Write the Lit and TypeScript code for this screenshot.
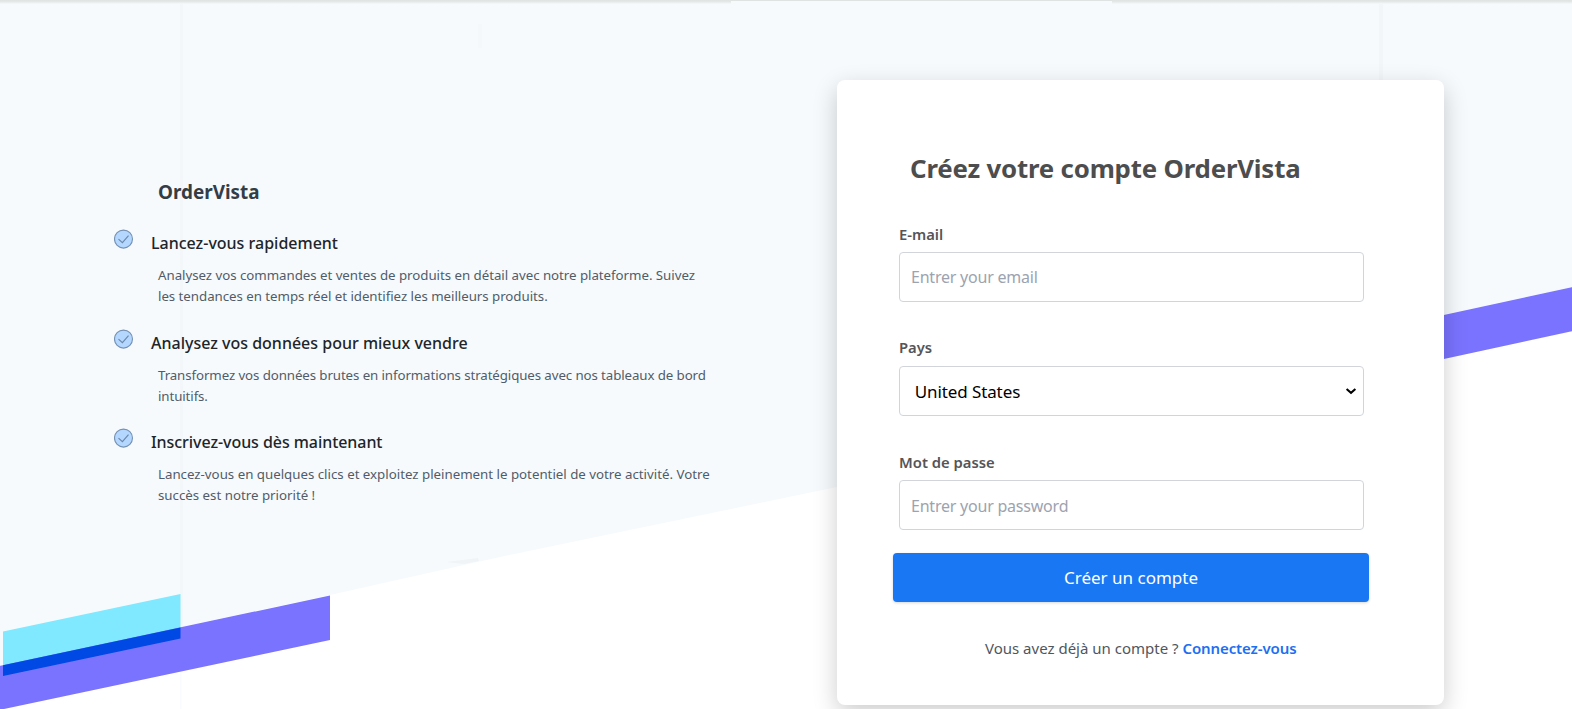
import { LitElement, html, css, svg } from "lit";
import { customElement } from "lit/decorators.js";

interface Feature {
  kind: string;
  title: string;
  lines: string[];
}

const FEATURES: Feature[] = [
  {
    kind: "start",
    title: "Lancez-vous rapidement",
    lines: [
      "Analysez vos commandes et ventes de produits en détail avec notre plateforme. Suivez",
      "les tendances en temps réel et identifiez les meilleurs produits.",
    ],
  },
  {
    kind: "analyse",
    title: "Analysez vos données pour mieux vendre",
    lines: [
      "Transformez vos données brutes en informations stratégiques avec nos tableaux de bord",
      "intuitifs.",
    ],
  },
  {
    kind: "signup",
    title: "Inscrivez-vous dès maintenant",
    lines: [
      "Lancez-vous en quelques clics et exploitez pleinement le potentiel de votre activité. Votre",
      "succès est notre priorité !",
    ],
  },
];

@customElement("page-backdrop")
class PageBackdrop extends LitElement {
  static styles = css`
    :host {
      position: absolute;
      inset: 0;
      overflow: hidden;
    }
    svg {
      display: block;
    }
  `;

  render() {
    return html`<svg width="1572" height="709" viewBox="0 0 1572 709" aria-hidden="true">
      ${svg`
      <defs>
        <linearGradient id="top" x1="0" y1="0" x2="0" y2="1">
          <stop offset="0" stop-color="#dfe3e2" />
          <stop offset="0.4" stop-color="#e4e8e7" />
          <stop offset="1" stop-color="#f6fafd" />
        </linearGradient>
        <filter id="soft" x="-5%" y="-5%" width="110%" height="110%">
          <feGaussianBlur stdDeviation="0.6" />
        </filter>
      </defs>
      <rect width="1572" height="709" fill="#f6fafd" />
      <rect x="180" width="3" height="709" fill="#f3f7fa" />
      <rect x="478" width="4" y="24" height="24" fill="#f4f8fb" />
      <rect x="1379" width="4" height="709" fill="#f2f6f9" />
      <rect width="1572" height="1" fill="#dfe3e2" />
      <rect width="731" height="4" fill="url(#top)" />
      <rect x="1112" width="460" height="4" fill="url(#top)" />
      <polygon points="446,562 478,558 479,561 464,564" fill="#f1f4f6" filter="url(#soft)" />
      <g filter="url(#soft)">
        <polygon points="-5,667 330,595 500,557 837,487 1444,359 1580,330 1580,720 -5,720" fill="#fff" />
        <polygon points="3,631.5 180.5,594 180.5,638.5 3,676" fill="#80e9ff" />
        <polygon points="-5,667 330,595.5 330,640 -5,711" fill="#7a73ff" />
        <polygon points="3,665.3 180.5,627.5 180.5,638.5 3,676" fill="#0048e5" />
        <polygon points="1400,324.5 1580,285.5 1580,329.5 1400,368.5" fill="#7a73ff" />
      </g>
      <rect x="180" y="672" width="1.5" height="37" fill="#fafbfe" />
      `}
    </svg>`;
  }
}

@customElement("feature-list")
class FeatureList extends LitElement {
  static styles = css`
    :host {
      display: block;
      font-family: "Noto Sans", "Open Sans", sans-serif;
    }
    .brand {
      margin: 0 0 25.3px 44px;
      font-size: 18.9px;
      line-height: 28px;
      font-weight: 700;
      color: #343d46;
    }
    .list {
      display: grid;
      gap: 23.7px;
    }
    .item {
      display: grid;
      grid-template-columns: 20px 1fr;
      column-gap: 17px;
      align-items: start;
    }
    .icon {
      display: block;
      margin-top: -2px;
    }
    .title {
      margin: 0 0 10px;
      font-size: 16px;
      line-height: 24px;
      font-weight: 500;
      color: #212529;
      white-space: nowrap;
    }
    .text {
      margin: 0 0 0 7px;
      font-size: 13.3px;
      line-height: 21px;
      color: #515c69;
      white-space: nowrap;
    }
    .line {
      display: block;
    }
    .start .text {
      letter-spacing: -0.04px;
    }
    .analyse .text {
      letter-spacing: -0.1px;
    }
    .signup .text {
      letter-spacing: -0.01px;
    }
    .signup .title {
      letter-spacing: -0.06px;
    }
  `;

  render() {
    return html`
      <h2 class="brand">OrderVista</h2>
      <div class="list">
        ${FEATURES.map(
          (f) => html`
            <div class="item ${f.kind}">
              <svg class="icon" width="20" height="20" viewBox="0 0 20 20" fill="none" aria-hidden="true">
                <circle cx="9.5" cy="10.1" r="9" fill="#b3d7ff" stroke="#7591b3" stroke-width="1.1" />
                <path d="M4.5 10.2 L8.4 13.7 L14.5 6.7" stroke="#6b86a8" stroke-width="1.1" />
              </svg>
              <div>
                <h3 class="title">${f.title}</h3>
                <p class="text">${f.lines.map((l) => html`<span class="line">${l}</span>`)}</p>
              </div>
            </div>
          `
        )}
      </div>
    `;
  }
}

@customElement("signup-card")
class SignupCard extends LitElement {
  static styles = css`
    :host {
      display: block;
      box-sizing: border-box;
      width: 607px;
      height: 625px;
      padding: 70px 75px 0 56px;
      background: #fff;
      border-radius: 8px;
      box-shadow: 0 8px 24px rgba(0, 0, 0, 0.2);
      font-family: "Noto Sans", "Open Sans", sans-serif;
    }
    .title {
      margin: 0 0 37px 17px;
      font-size: 25.8px;
      letter-spacing: -0.18px;
      line-height: 36px;
      font-weight: 700;
      color: #4d4d4d;
      white-space: nowrap;
    }
    .fields {
      display: flex;
      flex-direction: column;
      padding: 0 5px 0 6px;
    }
    .label {
      margin-bottom: 7px;
      font-size: 14.8px;
      line-height: 22px;
      font-weight: 600;
      color: #555558;
    }
    .control {
      display: block;
      box-sizing: border-box;
      width: 100%;
      height: 50px;
      margin: 0 0 34px;
      padding: 0 11px;
      border: 1px solid #d1d5db;
      border-radius: 4px;
      background: #fff;
      font: 400 16px "Noto Sans", "Open Sans", sans-serif;
      letter-spacing: -0.22px;
      outline: none;
    }
    .control::placeholder {
      color: #9ca3af;
      opacity: 1;
    }
    .picker {
      display: grid;
      align-items: center;
      margin: 1px 0 35px;
    }
    .picker > * {
      grid-area: 1 / 1;
    }
    .select {
      margin: 0;
      padding: 0 14.7px;
      appearance: none;
      color: #000;
      font-size: 17px;
      letter-spacing: -0.1px;
    }
    .chevron {
      justify-self: end;
      margin-right: 7px;
      pointer-events: none;
    }
    .password {
      margin-bottom: 23px;
      padding-top: 1px;
    }
    .submit {
      display: block;
      width: 100%;
      height: 49px;
      padding: 0;
      border: 0;
      border-radius: 4px;
      background: #1977f4;
      box-shadow: 0 1px 3px rgba(0, 0, 0, 0.16);
      color: #fff;
      font: 400 17px "Noto Sans", "Open Sans", sans-serif;
    }
    .footer {
      margin: 34px 0 0 19.5px;
      font-size: 15px;
      line-height: 24px;
      text-align: center;
      color: #50565e;
      white-space: nowrap;
    }
    .link {
      color: #1d6ff2;
      font-weight: 600;
      letter-spacing: -0.1px;
      text-decoration: none;
    }
  `;

  render() {
    return html`
      <h1 class="title">Créez votre compte OrderVista</h1>
      <div class="fields">
        <label class="label" for="email">E-mail</label>
        <input class="control" id="email" type="email" placeholder="Entrer your email" />
        <label class="label" for="country">Pays</label>
        <div class="picker">
          <select class="control select" id="country">
            <option>United States</option>
          </select>
          <svg class="chevron" width="12" height="8" viewBox="0 0 12 8" fill="none" aria-hidden="true">
            <path d="M1.6 1.9 L6 5.8 L10.4 1.9" stroke="#000" stroke-width="2" />
          </svg>
        </div>
        <label class="label" for="password">Mot de passe</label>
        <input class="control password" id="password" type="password" placeholder="Entrer your password" />
      </div>
      <button class="submit">Créer un compte</button>
      <p class="footer">Vous avez déjà un compte ? <a class="link" href="#">Connectez-vous</a></p>
    `;
  }
}

@customElement("app-root")
class AppRoot extends LitElement {
  static styles = css`
    :host {
      display: block;
      position: relative;
      width: 1572px;
      height: 709px;
      overflow: hidden;
    }
    .layout {
      position: relative;
      display: grid;
      grid-template-columns: 723px 607px;
      align-items: start;
      padding: 80px 0 0 114px;
    }
    .intro {
      padding-top: 97.8px;
    }
  `;

  render() {
    return html`
      <page-backdrop></page-backdrop>
      <main class="layout">
        <feature-list class="intro"></feature-list>
        <signup-card></signup-card>
      </main>
    `;
  }
}
